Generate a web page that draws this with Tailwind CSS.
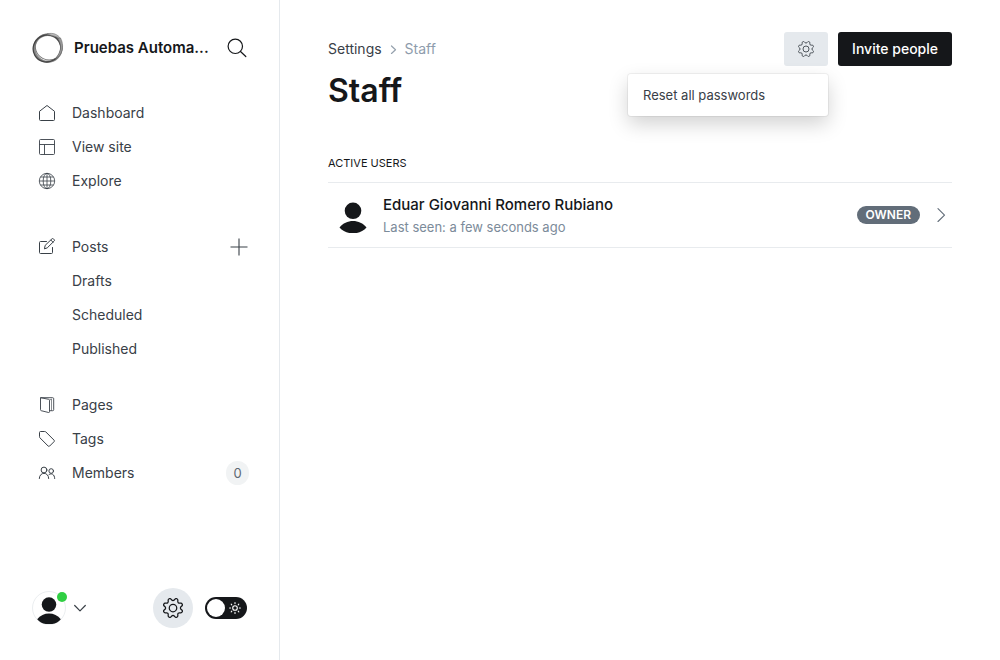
<!DOCTYPE html>
<html lang="en">
<head>
<meta charset="utf-8">
<meta name="viewport" content="width=device-width, initial-scale=1">
<title>Settings - Staff</title>
<script src="https://cdn.jsdelivr.net/npm/@tailwindcss/browser@4"></script>
</head>
<body class="flex min-h-screen bg-white font-['Inter',sans-serif] text-[#15171a]">
<svg class="hidden" aria-hidden="true">
  <symbol id="gear" viewBox="0 0 24 24"><path d="M10.546 2.438a1.957 1.957 0 0 0 2.908 0L14.4 1.4a1.959 1.959 0 0 1 3.41 1.413l-.071 1.4a1.958 1.958 0 0 0 2.051 2.054l1.4-.071a1.959 1.959 0 0 1 1.41 3.41l-1.042.94a1.96 1.96 0 0 0 0 2.909l1.042.94a1.959 1.959 0 0 1-1.413 3.41l-1.4-.071a1.958 1.958 0 0 0-2.056 2.056l.071 1.4A1.959 1.959 0 0 1 14.4 22.6l-.941-1.041a1.959 1.959 0 0 0-2.908 0L9.606 22.6A1.959 1.959 0 0 1 6.192 21.19l.072-1.4a1.958 1.958 0 0 0-2.056-2.056l-1.4.071A1.958 1.958 0 0 1 1.4 14.4l1.041-.94a1.96 1.96 0 0 0 0-2.909L1.4 9.606A1.958 1.958 0 0 1 2.809 6.2l1.4.071a1.958 1.958 0 0 0 2.058-2.06L6.2 2.81A1.959 1.959 0 0 1 9.606 1.4Z"/><circle cx="12" cy="12" r="4.5"/></symbol>
  <symbol id="person" viewBox="0 0 32 32"><circle cx="16" cy="9.800" r="8.300"/><path d="M2.500 26.500C9 17.800 23 17.800 29.500 26.500 23 34.300 9 34.300 2.500 26.500Z"/></symbol>
</svg>

<aside class="flex w-70 shrink-0 flex-col border-r border-[#e5e9ed] px-8 py-7">
  <div class="flex h-10 items-center">
    <svg class="size-8 shrink-0" viewBox="0 0 32 32" fill="none" role="img" aria-label="Ghost">
      <circle cx="15.800" cy="16.200" r="13.500" stroke="#888" stroke-width="2.400"/>
      <ellipse cx="16.800" cy="15.200" rx="13.600" ry="12.800" stroke="#777" stroke-width="1" transform="rotate(28 17 15)"/>
      <ellipse cx="15.300" cy="16.500" rx="14" ry="13.400" stroke="#444" stroke-width="1.300" transform="rotate(-30 15 17)"/>
      <path d="M15 1.900c6-1.600 11 .6 13.500 4.600-4-2.200-8-2.600-13.500-4.600Z" fill="#bbb" stroke="#777" stroke-width=".6"/>
      <path d="M28.500 6c2.500 4 3 11 0 16-1.500 2.500-3 4-5 5 3.500-5 5.500-9 5-13-.2-3-1-5-2.500-7Z" fill="#999" stroke="#666" stroke-width=".5"/>
    </svg>
    <span class="ml-2.5 flex-1 text-[15px] font-semibold whitespace-nowrap">Pruebas Automa...</span>
    <button class="-mr-0.5 flex size-6 items-center justify-center" aria-label="Search">
      <svg class="size-5" viewBox="0 0 20 20" fill="none" stroke="currentColor" stroke-width="1.200" stroke-linecap="round"><circle cx="8.300" cy="8.300" r="7.200"/><path d="m13.500 13.500 5.300 5"/></svg>
    </button>
  </div>

  <nav class="mt-7 flex flex-col text-sm text-[#394047]" aria-label="Main">
    <a href="#" class="flex h-8.5 items-center gap-4 pl-1.5"><svg class="size-[18px]" viewBox="0 0 18 18" fill="none" stroke="currentColor" stroke-linejoin="round"><path d="M1.500 7.300 9 1.500l7.500 5.800v8.200q0 1-1 1h-13q-1 0-1-1Z"/></svg>Dashboard</a>
    <a href="#" class="flex h-8.5 items-center gap-4 pl-1.5"><svg class="size-[18px]" viewBox="0 0 18 18" fill="none" stroke="currentColor" stroke-width=".9"><rect x="1.500" y="1.500" width="15" height="15" rx="1"/><path d="M1.500 6.500h15M6.500 6.500v10"/></svg>View site</a>
    <a href="#" class="flex h-8.5 items-center gap-4 pl-1.5"><svg class="size-[18px]" viewBox="0 0 18 18" fill="none" stroke="currentColor" stroke-width=".8"><circle cx="9" cy="9" r="7.700"/><ellipse cx="9" cy="9" rx="3.800" ry="7.700"/><path d="M1.300 9h15.400M2.500 5h13M2.500 13h13M9 1.300v15.400"/></svg>Explore</a>

    <div class="mt-8 flex h-8.5 items-center justify-between">
      <a href="#" class="flex items-center gap-4 pl-1.5"><svg class="size-[18px]" viewBox="0 0 18 18" fill="none" stroke="currentColor" stroke-linejoin="round" stroke-linecap="round"><path d="M8.500 3.500h-6q-1 0-1 1v10q0 1 1 1h11q1 0 1-1v-5M6.500 10.500l.7-3.200 6.800-6.500q.7-.6 1.500.1l.7.8q.6.700 0 1.300L9.500 9.600ZM12.900 2.100l2.100 2.100"/></svg>Posts</a>
      <a href="#" aria-label="New post" class="-mr-px flex size-[18px]"><svg class="size-[18px]" viewBox="0 0 18 18" fill="none" stroke="currentColor" stroke-width="1.100"><path d="M9 .5v17M.5 9h17"/></svg></a>
    </div>
    <a href="#" class="flex h-8.5 items-center pl-10">Drafts</a>
    <a href="#" class="flex h-8.5 items-center pl-10">Scheduled</a>
    <a href="#" class="flex h-8.5 items-center pl-10">Published</a>

    <a href="#" class="mt-5.5 flex h-8.5 items-center gap-4 pl-1.5"><svg class="size-[18px]" viewBox="0 0 18 18" fill="none" stroke="currentColor" stroke-width=".9" stroke-linejoin="round"><path d="M2.500 1.700 10.700 3.300q.8.200.8 1v11.400q0 1-.9.800l-7.400-1.800q-.7-.2-.7-1ZM2.500 1.700h12.200q1 0 1 1v11q0 1-1 1h-3.200"/><path d="M11.500 4.200 13.500 3v11.500"  stroke-width=".6"/></svg>Pages</a>
    <a href="#" class="flex h-8.5 items-center gap-4 pl-1.5"><svg class="size-[18px]" viewBox="0 0 18 18" fill="none" stroke="currentColor" stroke-linejoin="round"><path d="M1.500 2.500q0-1 1-1h4.200q.7 0 1.200.5l8.200 8.200q.7.700 0 1.400l-4.500 4.500q-.7.700-1.400 0L2 7.900q-.5-.5-.5-1.200Z"/></svg>Tags</a>
    <div class="flex h-8.5 items-center justify-between">
      <a href="#" class="flex items-center gap-4 pl-1.5"><svg class="size-[18px]" viewBox="0 0 18 18" fill="none" stroke="currentColor" stroke-linecap="round"><circle cx="6" cy="6" r="2.900"/><circle cx="13.200" cy="7" r="2.300"/><path d="M1.300 14.500c0-7 9.400-7 9.400 0M11 10.600c2.700-2 5.500-.3 5.700 3.900"/></svg>Members</a>
      <span class="-mr-0.5 flex h-6 w-[23px] items-center justify-center rounded-full bg-[#f1f3f4] text-[13px] text-[#5d6772]">0</span>
    </div>
  </nav>

  <div class="mt-auto -mb-2 flex h-16 items-center">
    <button class="flex items-center gap-2" aria-label="User menu">
      <span class="relative flex size-8.5 items-end justify-center rounded-full border border-[#ebeef0]">
        <svg class="size-7" fill="currentColor"><use href="#person"/></svg>
        <span class="absolute top-0 -right-0.5 size-2.5 rounded-full bg-[#30cf43]"></span>
      </span>
      <svg class="size-3" viewBox="0 0 12 12" fill="none" stroke="#394047" stroke-width="1.200" stroke-linecap="round" stroke-linejoin="round"><path d="m.7 3.500 5.300 5.300 5.300-5.300"/></svg>
    </button>
    <a href="#" aria-label="Settings" class="ml-auto flex size-10 items-center justify-center rounded-full bg-[#e5e9ed]"><svg class="size-5" fill="none" stroke="currentColor" stroke-width="1.500"><use href="#gear"/></svg></a>
    <label class="relative ml-3 h-[22px] w-[42px] cursor-pointer">
      <input type="checkbox" aria-label="Dark mode" class="block h-full w-full appearance-none rounded-full bg-[#15171a]">
      <span class="absolute top-0.5 left-0.5 size-[18px] rounded-full bg-white"></span>
      <svg class="absolute top-[5px] right-1.5 size-3" viewBox="0 0 12 12" fill="none" stroke="#fff" stroke-width="1.100" stroke-linecap="round"><circle cx="6" cy="6" r="2.300"/><path d="M6 .6v1M6 10.400v1M.6 6h1M10.400 6h1M2.200 2.200l.6.600M9.200 9.200l.6.600M2.200 9.800l.6-.6M9.200 2.800l.6-.6"/></svg>
    </label>
  </div>
</aside>

<main class="min-w-0 flex-1 px-12 pt-8">
  <header class="flex items-start justify-between">
    <div>
      <nav class="mt-[7px] flex items-center text-sm font-normal" aria-label="Breadcrumb">
        <a href="#" class="text-[#394047]">Settings</a>
        <svg class="mx-[7px] size-[9px]" viewBox="0 0 9 9" fill="none" stroke="#95a1ad" stroke-width="1.200" stroke-linecap="round" stroke-linejoin="round"><path d="m2.500 1 4 3.800-4 3.700"/></svg>
        <span class="text-[#8e9cac]">Staff</span>
      </nav>
      <h1 class="mt-3 text-[32px] leading-10 font-semibold">Staff</h1>
    </div>
    <div class="relative flex gap-2.5">
      <button class="flex h-8.5 w-11 items-center justify-center rounded-[3px] bg-[#e5e9ed]" aria-label="Staff actions" aria-expanded="true"><svg class="size-4" fill="none" stroke="#394047" stroke-width="1.300"><use href="#gear"/></svg></button>
      <button class="h-8.5 rounded-[3px] bg-[#15171a] px-3.5 text-sm font-medium text-white">Invite people</button>
      <div class="absolute top-[42px] right-31 w-50 rounded-[3px] bg-white pt-[7px] pb-[5px] shadow-[0_0_0_1px_rgba(0,0,0,0.05),0_8px_20px_rgba(0,0,0,0.18)]">
        <button class="block h-[30px] w-full px-[15px] text-left text-[13px] text-[#394047]">Reset all passwords</button>
      </div>
    </div>
  </header>

  <section class="mt-11">
    <h2 class="pb-[11px] text-[11px] leading-4 font-normal uppercase">Active users</h2>
    <a href="#" class="flex h-[66px] items-center border-y border-[#e8ebee]">
      <svg class="mt-1 ml-[9px] size-8" fill="currentColor"><use href="#person"/></svg>
      <div class="ml-3.5 min-w-0 flex-1">
        <h3 class="pt-px text-[15px] leading-5 font-medium">Eduar Giovanni Romero Rubiano</h3>
        <p class="mt-0.5 text-[13px] leading-5 text-[#7c8b9a]">Last seen: a few seconds ago</p>
      </div>
      <span class="flex h-[18px] items-center rounded-full bg-[#626d79] px-[9px] text-xs font-semibold text-white uppercase">Owner</span>
      <svg class="mr-1 ml-3.5 size-3.5" viewBox="0 0 14 14" fill="none" stroke="#626d79" stroke-width="1.100" stroke-linecap="round" stroke-linejoin="round"><path d="m4 .7 6.500 6.500L4 13.500"/></svg>
    </a>
  </section>
</main>
</body>
</html>
